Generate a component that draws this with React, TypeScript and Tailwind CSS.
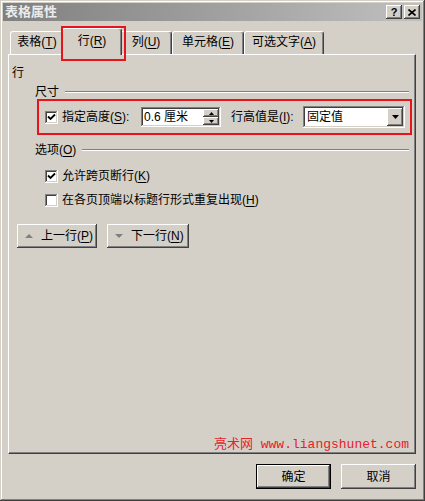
import React from "react";

const raised =
  "shadow-[inset_-1px_-1px_#404040,inset_1px_1px_#ffffff,inset_-2px_-2px_#808080,inset_2px_2px_#d4d0c8]";
const sunken =
  "shadow-[inset_-1px_-1px_#ffffff,inset_1px_1px_#808080,inset_-2px_-2px_#d4d0c8,inset_2px_2px_#404040]";

const Check = ({ checked }: { checked: boolean }) => (
  <div className={`w-[13px] h-[13px] bg-white shrink-0 flex items-center justify-center ${sunken}`}>
    {checked && (
      <svg width="9" height="9" viewBox="0 0 9 9">
        <path d="M1 3.5 L3.5 6 L8 1.5" stroke="#000" strokeWidth="1.8" fill="none" />
      </svg>
    )}
  </div>
);

const U = ({ c }: { c: string }) => <span className="underline underline-offset-2">{c}</span>;

const Tri = ({ up, color = "#000", w = 7 }: { up: boolean; color?: string; w?: number }) => (
  <svg width={w} height={Math.ceil(w / 2)} viewBox={`0 0 ${w} ${Math.ceil(w / 2)}`}>
    {up ? (
      <polygon points={`0,${Math.ceil(w / 2)} ${w},${Math.ceil(w / 2)} ${w / 2},0`} fill={color} />
    ) : (
      <polygon points={`0,0 ${w},0 ${w / 2},${Math.ceil(w / 2)}`} fill={color} />
    )}
  </svg>
);

const Tab = ({ children, w }: { children: React.ReactNode; w: number }) => (
  <div
    style={{ width: w }}
    className="h-[23px] border-t border-l border-white border-r border-r-[#404040] rounded-tl-[3px] rounded-tr-[3px] shadow-[inset_-1px_0_#808080] flex items-center justify-center pb-[2px]"
  >
    {children}
  </div>
);

const Group = ({ children, lineStart }: { children: React.ReactNode; lineStart: number }) => (
  <div className="flex items-center h-[14px] leading-[14px] pl-[26px] pr-[6px]">
    <span style={{ width: lineStart }} className="shrink-0 whitespace-nowrap">
      {children}
    </span>
    <div className="flex-1 border-t border-[#808080] border-b border-b-white h-[2px]" />
  </div>
);

export default function App() {
  return (
    <div
      className="w-[425px] h-[501px] bg-[#d4d0c8] p-[3px] flex flex-col text-[12px] text-black shadow-[inset_-1px_-1px_#404040,inset_1px_1px_#d4d0c8,inset_-2px_-2px_#808080,inset_2px_2px_#ffffff]"
      style={{ fontFamily: '"Liberation Sans", "Noto Sans CJK SC", sans-serif' }}
    >
      {/* Title bar */}
      <div className="h-[18px] bg-gradient-to-r from-[#808080] to-[#c0c0c0] flex items-center pl-[2px] pr-[2px]">
        <span className="text-[13px] font-bold text-[#ececec] leading-[18px]">表格属性</span>
        <div className="flex-1" />
        <div className="flex gap-[2px]">
          <div className={`w-[16px] h-[14px] bg-[#d4d0c8] flex items-center justify-center ${raised}`}>
            <span className="text-[11px] font-bold leading-none" style={{ fontFamily: '"Liberation Sans", sans-serif' }}>
              ?
            </span>
          </div>
          <div className={`w-[16px] h-[14px] bg-[#d4d0c8] flex items-center justify-center ${raised}`}>
            <svg width="8" height="7" viewBox="0 0 8 7">
              <path d="M0.5 0.5 L7.5 6.5 M7.5 0.5 L0.5 6.5" stroke="#000" strokeWidth="1.6" />
            </svg>
          </div>
        </div>
      </div>

      {/* Tabs */}
      <div className="h-[33px] flex items-end pl-[7px]">
        <Tab w={54}>
          表格(<U c="T" />)
        </Tab>
        <div className="relative z-10 -mx-[2px] mb-[-1px] w-[60px] h-[27px] bg-[#d4d0c8] border-t border-l border-white border-r border-r-[#404040] rounded-tl-[3px] rounded-tr-[3px] shadow-[inset_-1px_0_#808080] flex items-center justify-center pb-[3px]">
          行(<U c="R" />)
          <div className="absolute left-[-2px] top-[-3px] w-[65px] h-[35px] border-2 border-[#e8141c]" />
        </div>
        <Tab w={52}>
          列(<U c="U" />)
        </Tab>
        <Tab w={72}>
          单元格(<U c="E" />)
        </Tab>
        <Tab w={80}>
          可选文字(<U c="A" />)
        </Tab>
      </div>

      {/* Panel */}
      <div className="ml-[5px] w-[408px] h-[400px] border-t border-l border-white border-r border-b border-r-[#404040] border-b-[#404040] shadow-[inset_-1px_-1px_#808080] flex flex-col">
        <div className="mt-[10px] pl-[3px] leading-[16px] h-[16px]">行</div>
        <div className="mt-[4px]">
          <Group lineStart={30}>尺寸</Group>
        </div>

        {/* red framed row */}
        <div className="ml-[28px] w-[375px] h-[36px] border-2 border-[#e8141c] flex items-center pl-[6px]">
          <Check checked />
          <span className="ml-[4px] w-[79px] whitespace-nowrap">
            指定高度(<U c="S" />):
          </span>
          <div className={`w-[80px] h-[20px] bg-white flex items-center pl-[3px] pr-[2px] ${sunken}`}>
            <span className="flex-1 whitespace-nowrap">0.6 厘米</span>
            <div className="w-[16px] h-[16px] flex flex-col">
              <div className={`h-[8px] bg-[#d4d0c8] flex items-center justify-center ${raised}`}>
                <Tri up w={5} />
              </div>
              <div className={`h-[8px] bg-[#d4d0c8] flex items-center justify-center ${raised}`}>
                <Tri up={false} w={5} />
              </div>
            </div>
          </div>
          <span className="ml-[10px] w-[72px] whitespace-nowrap">
            行高值是(<U c="I" />):
          </span>
          <div className={`w-[102px] h-[22px] bg-white flex items-center pl-[4px] pr-[2px] ${sunken}`}>
            <span className="flex-1">固定值</span>
            <div className={`w-[16px] h-[18px] bg-[#d4d0c8] flex items-center justify-center ${raised}`}>
              <Tri up={false} w={7} />
            </div>
          </div>
        </div>

        <div className="mt-[8px]">
          <Group lineStart={47}>
            选项(<U c="O" />)
          </Group>
        </div>

        <div className="mt-[11px] ml-[36px] h-[16px] flex items-center">
          <Check checked />
          <span className="ml-[4px]">
            允许跨页断行(<U c="K" />)
          </span>
        </div>
        <div className="mt-[8px] ml-[36px] h-[16px] flex items-center">
          <Check checked={false} />
          <span className="ml-[4px]">
            在各页顶端以标题行形式重复出现(<U c="H" />)
          </span>
        </div>

        <div className="mt-[16px] ml-[8px] flex gap-[10px]">
          <div className={`w-[80px] h-[24px] flex items-center pl-[8px] ${raised}`}>
            <Tri up color="#808080" w={8} />
            <span className="ml-[8px]">
              上一行(<U c="P" />)
            </span>
          </div>
          <div className={`w-[82px] h-[24px] flex items-center pl-[8px] ${raised}`}>
            <Tri up={false} color="#808080" w={8} />
            <span className="ml-[8px]">
              下一行(<U c="N" />)
            </span>
          </div>
        </div>

        <div className="flex-1" />
        <div
          className="text-right pr-[6px] text-[13px] leading-[16px] text-[#e8202a] mb-[0px]"
          style={{ fontFamily: '"Liberation Mono", "Noto Sans CJK SC", monospace' }}
        >
          <span style={{ fontFamily: '"Noto Sans CJK SC", sans-serif' }}>亮术网</span> www.liangshunet.com
        </div>
      </div>

      {/* Bottom buttons */}
      <div className="mt-[10px] flex justify-end gap-[10px] pr-[6px]">
        <div className="w-[75px] h-[25px] border border-black">
          <div className={`w-full h-full flex items-center justify-center ${raised}`}>确定</div>
        </div>
        <div className={`w-[75px] h-[25px] flex items-center justify-center ${raised}`}>取消</div>
      </div>
    </div>
  );
}
